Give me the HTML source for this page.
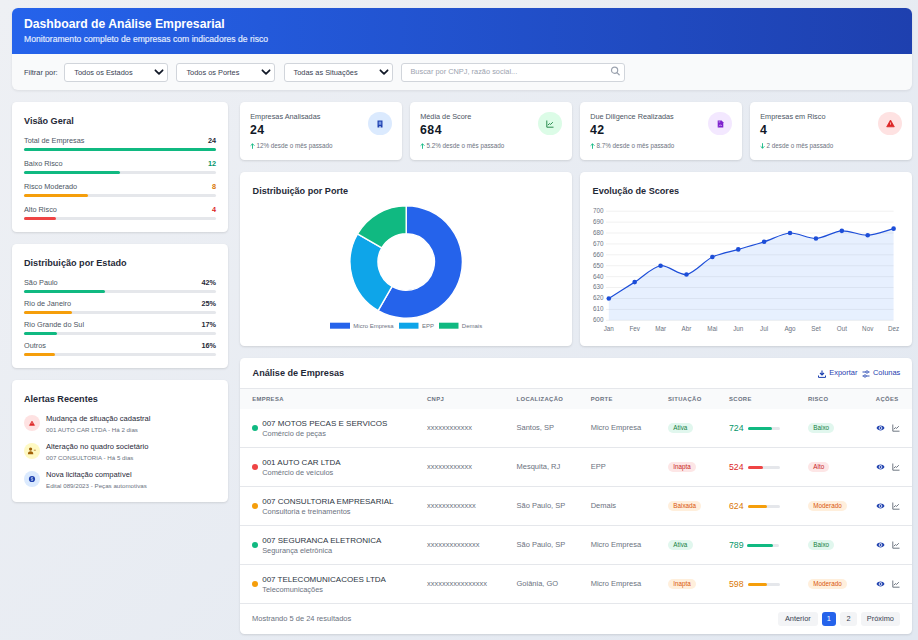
<!DOCTYPE html>
<html><head><meta charset="utf-8"><style>
html,body{margin:0;padding:0;width:918px;height:640px;overflow:hidden;}
body{background:linear-gradient(135deg,#eef0f4 0%,#e2e8f1 100%);font-family:"Liberation Sans",sans-serif;position:relative;}
.t{position:absolute;line-height:1;white-space:nowrap;}
.r{position:absolute;}
</style></head><body>
<div class="r" style="left:12px;top:8px;width:900px;height:82px;background:#f9fafb;border-radius:6px;overflow:hidden;box-shadow:0 1px 3px rgba(0,0,0,0.08);"></div>
<div class="r" style="left:12px;top:8px;width:900px;height:45.6px;background:linear-gradient(90deg,#2563eb,#1e40af);border-radius:6px 6px 0 0;"></div>
<div class="t" style="left:24.00px;top:17.77px;font-size:12.2px;color:#ffffff;font-weight:700;">Dashboard de Análise Empresarial</div>
<div class="t" style="left:24.00px;top:35.42px;font-size:8.6px;color:#e6efff;font-weight:400;-webkit-text-stroke:0.15px #e6efff;">Monitoramento completo de empresas com indicadores de risco</div>
<div class="t" style="left:24.00px;top:68.64px;font-size:7.4px;color:#374151;font-weight:500;">Filtrar por:</div>
<div class="r" style="left:64.3px;top:63.3px;width:103.50000000000001px;height:18.3px;background:#fff;border:1px solid #d1d5db;border-radius:3px;box-sizing:border-box;"></div>
<div class="t" style="left:74.30px;top:69.04px;font-size:7.4px;color:#374151;font-weight:400;">Todos os Estados</div>
<svg class="r" style="left:153.8px;top:67px;width:10px;height:10px" viewBox="0 0 10 10"><path d="M1.4 3.3 L5 6.8 L8.6 3.3" fill="none" stroke="#111827" stroke-width="1.75" stroke-linecap="round" stroke-linejoin="round"/></svg>
<div class="r" style="left:176.4px;top:63.3px;width:98.4px;height:18.3px;background:#fff;border:1px solid #d1d5db;border-radius:3px;box-sizing:border-box;"></div>
<div class="t" style="left:186.40px;top:69.04px;font-size:7.4px;color:#374151;font-weight:400;">Todos os Portes</div>
<svg class="r" style="left:260.8px;top:67px;width:10px;height:10px" viewBox="0 0 10 10"><path d="M1.4 3.3 L5 6.8 L8.6 3.3" fill="none" stroke="#111827" stroke-width="1.75" stroke-linecap="round" stroke-linejoin="round"/></svg>
<div class="r" style="left:283.5px;top:63.3px;width:109.30000000000001px;height:18.3px;background:#fff;border:1px solid #d1d5db;border-radius:3px;box-sizing:border-box;"></div>
<div class="t" style="left:293.50px;top:69.04px;font-size:7.4px;color:#374151;font-weight:400;">Todas as Situações</div>
<svg class="r" style="left:378.8px;top:67px;width:10px;height:10px" viewBox="0 0 10 10"><path d="M1.4 3.3 L5 6.8 L8.6 3.3" fill="none" stroke="#111827" stroke-width="1.75" stroke-linecap="round" stroke-linejoin="round"/></svg>
<div class="r" style="left:401.3px;top:62.5px;width:223.5px;height:19px;background:#fff;border:1px solid #d1d5db;border-radius:3px;box-sizing:border-box;"></div>
<div class="t" style="left:410.40px;top:68.14px;font-size:7.4px;color:#9ca3af;font-weight:400;">Buscar por CNPJ, razão social...</div>
<svg class="r" style="left:610px;top:66px;width:11px;height:11px" viewBox="0 0 11 11"><circle cx="4.6" cy="4.2" r="3.1" fill="none" stroke="#9ca3af" stroke-width="1.2"/><path d="M6.9 6.6 L9.2 8.8" stroke="#9ca3af" stroke-width="1.3" stroke-linecap="round"/></svg>
<div class="r" style="left:12px;top:102px;width:216px;height:130px;background:#fff;border-radius:4.5px;box-shadow:0 1px 3px rgba(0,0,0,0.07),0 1px 2px rgba(0,0,0,0.05);"></div>
<div class="t" style="left:24.00px;top:117.30px;font-size:9.1px;color:#1f2937;font-weight:700;">Visão Geral</div>
<div class="t" style="left:24.00px;top:136.82px;font-size:7.3px;color:#4b5563;font-weight:400;">Total de Empresas</div>
<div class="t" style="right:702.00px;top:136.82px;font-size:7.3px;color:#1f2937;font-weight:700;">24</div>
<div class="r" style="left:24px;top:148px;width:192px;height:3px;background:#e5e7eb;border-radius:2px;"></div>
<div class="r" style="left:24px;top:148px;width:192.0px;height:3px;background:#10b981;border-radius:2px;"></div>
<div class="t" style="left:24.00px;top:159.82px;font-size:7.3px;color:#4b5563;font-weight:400;">Baixo Risco</div>
<div class="t" style="right:702.00px;top:159.82px;font-size:7.3px;color:#059669;font-weight:700;">12</div>
<div class="r" style="left:24px;top:171px;width:192px;height:3px;background:#e5e7eb;border-radius:2px;"></div>
<div class="r" style="left:24px;top:171px;width:96.0px;height:3px;background:#10b981;border-radius:2px;"></div>
<div class="t" style="left:24.00px;top:182.82px;font-size:7.3px;color:#4b5563;font-weight:400;">Risco Moderado</div>
<div class="t" style="right:702.00px;top:182.82px;font-size:7.3px;color:#d97706;font-weight:700;">8</div>
<div class="r" style="left:24px;top:194px;width:192px;height:3px;background:#e5e7eb;border-radius:2px;"></div>
<div class="r" style="left:24px;top:194px;width:64.0px;height:3px;background:#f59e0b;border-radius:2px;"></div>
<div class="t" style="left:24.00px;top:205.82px;font-size:7.3px;color:#4b5563;font-weight:400;">Alto Risco</div>
<div class="t" style="right:702.00px;top:205.82px;font-size:7.3px;color:#dc2626;font-weight:700;">4</div>
<div class="r" style="left:24px;top:217px;width:192px;height:3px;background:#e5e7eb;border-radius:2px;"></div>
<div class="r" style="left:24px;top:217px;width:32.0px;height:3px;background:#ef4444;border-radius:2px;"></div>
<div class="r" style="left:12px;top:244px;width:216px;height:124px;background:#fff;border-radius:4.5px;box-shadow:0 1px 3px rgba(0,0,0,0.07),0 1px 2px rgba(0,0,0,0.05);"></div>
<div class="t" style="left:24.00px;top:259.30px;font-size:9.1px;color:#1f2937;font-weight:700;">Distribuição por Estado</div>
<div class="t" style="left:24.00px;top:278.82px;font-size:7.3px;color:#4b5563;font-weight:400;">São Paulo</div>
<div class="t" style="right:702.00px;top:278.82px;font-size:7.3px;color:#1f2937;font-weight:700;">42%</div>
<div class="r" style="left:24px;top:290px;width:192px;height:3px;background:#e5e7eb;border-radius:2px;"></div>
<div class="r" style="left:24px;top:290px;width:80.64px;height:3px;background:#10b981;border-radius:2px;"></div>
<div class="t" style="left:24.00px;top:299.82px;font-size:7.3px;color:#4b5563;font-weight:400;">Rio de Janeiro</div>
<div class="t" style="right:702.00px;top:299.82px;font-size:7.3px;color:#1f2937;font-weight:700;">25%</div>
<div class="r" style="left:24px;top:311px;width:192px;height:3px;background:#e5e7eb;border-radius:2px;"></div>
<div class="r" style="left:24px;top:311px;width:48.0px;height:3px;background:#f59e0b;border-radius:2px;"></div>
<div class="t" style="left:24.00px;top:320.82px;font-size:7.3px;color:#4b5563;font-weight:400;">Rio Grande do Sul</div>
<div class="t" style="right:702.00px;top:320.82px;font-size:7.3px;color:#1f2937;font-weight:700;">17%</div>
<div class="r" style="left:24px;top:332px;width:192px;height:3px;background:#e5e7eb;border-radius:2px;"></div>
<div class="r" style="left:24px;top:332px;width:32.64px;height:3px;background:#10b981;border-radius:2px;"></div>
<div class="t" style="left:24.00px;top:341.82px;font-size:7.3px;color:#4b5563;font-weight:400;">Outros</div>
<div class="t" style="right:702.00px;top:341.82px;font-size:7.3px;color:#1f2937;font-weight:700;">16%</div>
<div class="r" style="left:24px;top:353px;width:192px;height:3px;background:#e5e7eb;border-radius:2px;"></div>
<div class="r" style="left:24px;top:353px;width:30.72px;height:3px;background:#f59e0b;border-radius:2px;"></div>
<div class="r" style="left:12px;top:380px;width:216px;height:122px;background:#fff;border-radius:4.5px;box-shadow:0 1px 3px rgba(0,0,0,0.07),0 1px 2px rgba(0,0,0,0.05);"></div>
<div class="t" style="left:24.00px;top:395.00px;font-size:9.1px;color:#1f2937;font-weight:700;">Alertas Recentes</div>
<div class="r" style="left:24px;top:414.7px;width:16px;height:16px;background:#fee2e2;border-radius:50%;"></div>
<svg class="r" style="left:28px;top:418.7px;width:8px;height:8px" viewBox="0 0 8 8"><path d="M4 2 L6.6 6.4 L1.4 6.4 Z" fill="#dc2626" stroke="#dc2626" stroke-width="0.5" stroke-linejoin="round"/><rect x="3.7" y="3.6" width="0.6" height="1.5" fill="#fecaca"/></svg>
<div class="t" style="left:46.00px;top:414.71px;font-size:7.55px;color:#1f2937;font-weight:400;">Mudança de situação cadastral</div>
<div class="t" style="left:46.00px;top:426.65px;font-size:6.2px;color:#6b7280;font-weight:400;">001 AUTO CAR LTDA - Há 2 dias</div>
<div class="r" style="left:24px;top:442.7px;width:16px;height:16px;background:#fef9c3;border-radius:50%;"></div>
<svg class="r" style="left:27px;top:446.7px;width:10px;height:8px" viewBox="0 0 10 8"><circle cx="3.6" cy="2.1" r="1.6" fill="#a16207"/><path d="M0.9 7.3 C0.9 4.9 1.8 4.2 3.6 4.2 C5.4 4.2 6.3 4.9 6.3 7.3 Z" fill="#a16207"/><path d="M6.8 3.2 L8.8 3.2" stroke="#a16207" stroke-width="0.7"/></svg>
<div class="t" style="left:46.00px;top:442.71px;font-size:7.55px;color:#1f2937;font-weight:400;">Alteração no quadro societário</div>
<div class="t" style="left:46.00px;top:454.65px;font-size:6.2px;color:#6b7280;font-weight:400;">007 CONSULTORIA - Há 5 dias</div>
<div class="r" style="left:24px;top:470.7px;width:16px;height:16px;background:#dbeafe;border-radius:50%;"></div>
<svg class="r" style="left:28px;top:474.7px;width:8px;height:8px" viewBox="0 0 8 8"><circle cx="4" cy="4" r="3.1" fill="#1e40af"/><path d="M4.9 2.9 C4.6 2.4 3.2 2.4 3.2 3.3 C3.2 4.1 4.9 3.9 4.9 4.8 C4.9 5.6 3.4 5.6 3.1 5.1 M4 2 V6" fill="none" stroke="#dbeafe" stroke-width="0.55"/></svg>
<div class="t" style="left:46.00px;top:470.71px;font-size:7.55px;color:#1f2937;font-weight:400;">Nova licitação compatível</div>
<div class="t" style="left:46.00px;top:482.65px;font-size:6.2px;color:#6b7280;font-weight:400;">Edital 089/2023 - Peças automotivas</div>
<div class="r" style="left:240px;top:102px;width:162px;height:58px;background:#fff;border-radius:4.5px;box-shadow:0 1px 3px rgba(0,0,0,0.07),0 1px 2px rgba(0,0,0,0.05);"></div>
<div class="t" style="left:250.20px;top:112.62px;font-size:7.3px;color:#4b5563;font-weight:400;">Empresas Analisadas</div>
<div class="t" style="left:250.00px;top:123.79px;font-size:12.3px;color:#111827;font-weight:700;letter-spacing:0.5px;">24</div>
<svg class="r" style="left:250px;top:143px;width:5px;height:6px" viewBox="0 0 5 6"><path d="M2.5 5.8 L2.5 0.8 M0.6 2.7 L2.5 0.8 L4.4 2.7" fill="none" stroke="#10b981" stroke-width="0.9"/></svg>
<div class="t" style="left:256.50px;top:143.27px;font-size:6.3px;color:#6b7280;font-weight:400;">12% desde o mês passado</div>
<div class="r" style="left:368.3px;top:112.1px;width:23.4px;height:23.4px;background:#dbeafe;border-radius:50%;"></div>
<svg class="r" style="left:376px;top:119.8px;width:8px;height:8px" viewBox="0 0 8 8"><path d="M1.5 0.5 H6.5 V7.5 H4.6 V6 H3.4 V7.5 H1.5 Z" fill="#1e40af"/><rect x="2.7" y="1.6" width="2.6" height="3.2" fill="#7b9be6"/></svg>
<div class="r" style="left:410px;top:102px;width:162px;height:58px;background:#fff;border-radius:4.5px;box-shadow:0 1px 3px rgba(0,0,0,0.07),0 1px 2px rgba(0,0,0,0.05);"></div>
<div class="t" style="left:420.20px;top:112.62px;font-size:7.3px;color:#4b5563;font-weight:400;">Média de Score</div>
<div class="t" style="left:420.00px;top:123.79px;font-size:12.3px;color:#111827;font-weight:700;letter-spacing:0.5px;">684</div>
<svg class="r" style="left:420px;top:143px;width:5px;height:6px" viewBox="0 0 5 6"><path d="M2.5 5.8 L2.5 0.8 M0.6 2.7 L2.5 0.8 L4.4 2.7" fill="none" stroke="#10b981" stroke-width="0.9"/></svg>
<div class="t" style="left:426.50px;top:143.27px;font-size:6.3px;color:#6b7280;font-weight:400;">5.2% desde o mês passado</div>
<div class="r" style="left:538.3px;top:112.1px;width:23.4px;height:23.4px;background:#dcfce7;border-radius:50%;"></div>
<svg class="r" style="left:546px;top:119.8px;width:8px;height:8px" viewBox="0 0 8 8"><path d="M0.8 0.5 V7.2 H7.5" fill="none" stroke="#15803d" stroke-width="0.9"/><path d="M1.8 5.2 L3.4 3.6 L4.6 4.4 L6.8 2.2" fill="none" stroke="#15803d" stroke-width="0.9"/></svg>
<div class="r" style="left:580px;top:102px;width:162px;height:58px;background:#fff;border-radius:4.5px;box-shadow:0 1px 3px rgba(0,0,0,0.07),0 1px 2px rgba(0,0,0,0.05);"></div>
<div class="t" style="left:590.20px;top:112.62px;font-size:7.3px;color:#4b5563;font-weight:400;">Due Diligence Realizadas</div>
<div class="t" style="left:590.00px;top:123.79px;font-size:12.3px;color:#111827;font-weight:700;letter-spacing:0.5px;">42</div>
<svg class="r" style="left:590px;top:143px;width:5px;height:6px" viewBox="0 0 5 6"><path d="M2.5 5.8 L2.5 0.8 M0.6 2.7 L2.5 0.8 L4.4 2.7" fill="none" stroke="#10b981" stroke-width="0.9"/></svg>
<div class="t" style="left:596.50px;top:143.27px;font-size:6.3px;color:#6b7280;font-weight:400;">8.7% desde o mês passado</div>
<div class="r" style="left:708.3px;top:112.1px;width:23.4px;height:23.4px;background:#f3e8ff;border-radius:50%;"></div>
<svg class="r" style="left:716.5px;top:119.8px;width:7px;height:8px" viewBox="0 0 7 8"><path d="M0.7 0.5 H4.6 L6.3 2.2 V7.5 H0.7 Z" fill="#7e22ce"/><path d="M1.8 6 C2.6 4.8 4.2 4.8 5 6" stroke="#e9d5ff" stroke-width="0.7" fill="none"/><rect x="1.6" y="1.6" width="1.6" height="0.7" fill="#e9d5ff"/></svg>
<div class="r" style="left:750px;top:102px;width:162px;height:58px;background:#fff;border-radius:4.5px;box-shadow:0 1px 3px rgba(0,0,0,0.07),0 1px 2px rgba(0,0,0,0.05);"></div>
<div class="t" style="left:760.20px;top:112.62px;font-size:7.3px;color:#4b5563;font-weight:400;">Empresas em Risco</div>
<div class="t" style="left:760.00px;top:123.79px;font-size:12.3px;color:#111827;font-weight:700;letter-spacing:0.5px;">4</div>
<svg class="r" style="left:760px;top:143px;width:5px;height:6px" viewBox="0 0 5 6"><path d="M2.5 0.2 L2.5 5.2 M0.6 3.3 L2.5 5.2 L4.4 3.3" fill="none" stroke="#10b981" stroke-width="0.9"/></svg>
<div class="t" style="left:766.50px;top:143.27px;font-size:6.3px;color:#6b7280;font-weight:400;">2 desde o mês passado</div>
<div class="r" style="left:878.3px;top:112.1px;width:23.4px;height:23.4px;background:#fee2e2;border-radius:50%;"></div>
<svg class="r" style="left:885.5px;top:119.3px;width:9px;height:9px" viewBox="0 0 9 9"><path d="M4.5 1 L8.3 7.8 L0.7 7.8 Z" fill="#dc2626" stroke="#dc2626" stroke-width="0.8" stroke-linejoin="round"/><rect x="4.1" y="3.5" width="0.8" height="2.2" fill="#fecaca"/></svg>
<div class="r" style="left:240px;top:172px;width:332px;height:174px;background:#fff;border-radius:4.5px;box-shadow:0 1px 3px rgba(0,0,0,0.07),0 1px 2px rgba(0,0,0,0.05);"></div>
<div class="t" style="left:252.60px;top:187.20px;font-size:9.1px;color:#1f2937;font-weight:700;">Distribuição por Porte</div>
<div class="r" style="left:580px;top:172px;width:332px;height:174px;background:#fff;border-radius:4.5px;box-shadow:0 1px 3px rgba(0,0,0,0.07),0 1px 2px rgba(0,0,0,0.05);"></div>
<div class="t" style="left:592.60px;top:187.20px;font-size:9.1px;color:#1f2937;font-weight:700;">Evolução de Scores</div>
<svg class="r" style="left:0;top:0;width:918px;height:640px;overflow:visible" viewBox="0 0 918 640"><path d="M406.20 205.80 A56.2 56.2 0 1 1 378.10 310.67 L392.10 286.42 A28.2 28.2 0 1 0 406.20 233.80 Z" fill="#2563eb" stroke="#fff" stroke-width="1.4" stroke-linejoin="round"/><path d="M378.10 310.67 A56.2 56.2 0 0 1 357.53 233.90 L381.78 247.90 A28.2 28.2 0 0 0 392.10 286.42 Z" fill="#0ea5e9" stroke="#fff" stroke-width="1.4" stroke-linejoin="round"/><path d="M357.53 233.90 A56.2 56.2 0 0 1 406.20 205.80 L406.20 233.80 A28.2 28.2 0 0 0 381.78 247.90 Z" fill="#10b981" stroke="#fff" stroke-width="1.4" stroke-linejoin="round"/><rect x="330" y="322.7" width="20" height="6" fill="#2563eb"/><rect x="399" y="322.7" width="19.5" height="6" fill="#0ea5e9"/><rect x="439" y="322.7" width="19.5" height="6" fill="#10b981"/><line x1="606" y1="211.20" x2="893.6" y2="211.20" stroke="rgba(0,0,0,0.08)" stroke-width="0.8"/><line x1="606" y1="222.11" x2="893.6" y2="222.11" stroke="rgba(0,0,0,0.08)" stroke-width="0.8"/><line x1="606" y1="233.02" x2="893.6" y2="233.02" stroke="rgba(0,0,0,0.08)" stroke-width="0.8"/><line x1="606" y1="243.93" x2="893.6" y2="243.93" stroke="rgba(0,0,0,0.08)" stroke-width="0.8"/><line x1="606" y1="254.84" x2="893.6" y2="254.84" stroke="rgba(0,0,0,0.08)" stroke-width="0.8"/><line x1="606" y1="265.75" x2="893.6" y2="265.75" stroke="rgba(0,0,0,0.08)" stroke-width="0.8"/><line x1="606" y1="276.66" x2="893.6" y2="276.66" stroke="rgba(0,0,0,0.08)" stroke-width="0.8"/><line x1="606" y1="287.57" x2="893.6" y2="287.57" stroke="rgba(0,0,0,0.08)" stroke-width="0.8"/><line x1="606" y1="298.48" x2="893.6" y2="298.48" stroke="rgba(0,0,0,0.08)" stroke-width="0.8"/><line x1="606" y1="309.39" x2="893.6" y2="309.39" stroke="rgba(0,0,0,0.08)" stroke-width="0.8"/><line x1="606" y1="320.30" x2="893.6" y2="320.30" stroke="rgba(0,0,0,0.08)" stroke-width="0.8"/><path d="M608.80 298.48 C616.57 293.57 626.92 287.02 634.69 282.12 C642.46 277.21 652.37 266.96 660.58 265.75 C667.91 264.67 679.22 275.70 686.47 274.48 C694.76 273.08 704.03 261.06 712.36 257.02 C719.57 253.53 730.49 251.68 738.25 249.38 C746.02 247.09 756.43 244.19 764.15 241.75 C771.96 239.28 782.14 233.52 790.04 233.02 C797.68 232.54 808.24 238.80 815.93 238.47 C823.77 238.14 833.94 231.34 841.82 230.84 C849.48 230.35 860.01 235.53 867.71 235.20 C875.54 234.87 885.83 230.62 893.60 228.66 L893.60 320.30 L608.80 320.30 Z" fill="rgba(59,130,246,0.12)"/><path d="M608.80 298.48 C616.57 293.57 626.92 287.02 634.69 282.12 C642.46 277.21 652.37 266.96 660.58 265.75 C667.91 264.67 679.22 275.70 686.47 274.48 C694.76 273.08 704.03 261.06 712.36 257.02 C719.57 253.53 730.49 251.68 738.25 249.38 C746.02 247.09 756.43 244.19 764.15 241.75 C771.96 239.28 782.14 233.52 790.04 233.02 C797.68 232.54 808.24 238.80 815.93 238.47 C823.77 238.14 833.94 231.34 841.82 230.84 C849.48 230.35 860.01 235.53 867.71 235.20 C875.54 234.87 885.83 230.62 893.60 228.66" fill="none" stroke="#1d4ed8" stroke-width="1.2"/><circle cx="608.80" cy="298.48" r="2.3" fill="#1d4ed8"/><circle cx="634.69" cy="282.12" r="2.3" fill="#1d4ed8"/><circle cx="660.58" cy="265.75" r="2.3" fill="#1d4ed8"/><circle cx="686.47" cy="274.48" r="2.3" fill="#1d4ed8"/><circle cx="712.36" cy="257.02" r="2.3" fill="#1d4ed8"/><circle cx="738.25" cy="249.38" r="2.3" fill="#1d4ed8"/><circle cx="764.15" cy="241.75" r="2.3" fill="#1d4ed8"/><circle cx="790.04" cy="233.02" r="2.3" fill="#1d4ed8"/><circle cx="815.93" cy="238.47" r="2.3" fill="#1d4ed8"/><circle cx="841.82" cy="230.84" r="2.3" fill="#1d4ed8"/><circle cx="867.71" cy="235.20" r="2.3" fill="#1d4ed8"/><circle cx="893.60" cy="228.66" r="2.3" fill="#1d4ed8"/></svg>
<div class="t" style="left:353.30px;top:322.72px;font-size:6px;color:#6b7280;font-weight:400;">Micro Empresa</div>
<div class="t" style="left:422.00px;top:322.72px;font-size:6px;color:#6b7280;font-weight:400;">EPP</div>
<div class="t" style="left:461.80px;top:322.72px;font-size:6px;color:#6b7280;font-weight:400;">Demais</div>
<div class="t" style="right:314.50px;top:208.07px;font-size:6.3px;color:#6b7280;font-weight:400;">700</div>
<div class="t" style="right:314.50px;top:218.98px;font-size:6.3px;color:#6b7280;font-weight:400;">690</div>
<div class="t" style="right:314.50px;top:229.89px;font-size:6.3px;color:#6b7280;font-weight:400;">680</div>
<div class="t" style="right:314.50px;top:240.80px;font-size:6.3px;color:#6b7280;font-weight:400;">670</div>
<div class="t" style="right:314.50px;top:251.71px;font-size:6.3px;color:#6b7280;font-weight:400;">660</div>
<div class="t" style="right:314.50px;top:262.62px;font-size:6.3px;color:#6b7280;font-weight:400;">650</div>
<div class="t" style="right:314.50px;top:273.53px;font-size:6.3px;color:#6b7280;font-weight:400;">640</div>
<div class="t" style="right:314.50px;top:284.44px;font-size:6.3px;color:#6b7280;font-weight:400;">630</div>
<div class="t" style="right:314.50px;top:295.35px;font-size:6.3px;color:#6b7280;font-weight:400;">620</div>
<div class="t" style="right:314.50px;top:306.26px;font-size:6.3px;color:#6b7280;font-weight:400;">610</div>
<div class="t" style="right:314.50px;top:317.17px;font-size:6.3px;color:#6b7280;font-weight:400;">600</div>
<div class="t" style="left:608.80px;transform:translateX(-50%);top:326.17px;font-size:6.3px;color:#6b7280;font-weight:400;">Jan</div>
<div class="t" style="left:634.69px;transform:translateX(-50%);top:326.17px;font-size:6.3px;color:#6b7280;font-weight:400;">Fev</div>
<div class="t" style="left:660.58px;transform:translateX(-50%);top:326.17px;font-size:6.3px;color:#6b7280;font-weight:400;">Mar</div>
<div class="t" style="left:686.47px;transform:translateX(-50%);top:326.17px;font-size:6.3px;color:#6b7280;font-weight:400;">Abr</div>
<div class="t" style="left:712.36px;transform:translateX(-50%);top:326.17px;font-size:6.3px;color:#6b7280;font-weight:400;">Mai</div>
<div class="t" style="left:738.25px;transform:translateX(-50%);top:326.17px;font-size:6.3px;color:#6b7280;font-weight:400;">Jun</div>
<div class="t" style="left:764.15px;transform:translateX(-50%);top:326.17px;font-size:6.3px;color:#6b7280;font-weight:400;">Jul</div>
<div class="t" style="left:790.04px;transform:translateX(-50%);top:326.17px;font-size:6.3px;color:#6b7280;font-weight:400;">Ago</div>
<div class="t" style="left:815.93px;transform:translateX(-50%);top:326.17px;font-size:6.3px;color:#6b7280;font-weight:400;">Set</div>
<div class="t" style="left:841.82px;transform:translateX(-50%);top:326.17px;font-size:6.3px;color:#6b7280;font-weight:400;">Out</div>
<div class="t" style="left:867.71px;transform:translateX(-50%);top:326.17px;font-size:6.3px;color:#6b7280;font-weight:400;">Nov</div>
<div class="t" style="left:893.60px;transform:translateX(-50%);top:326.17px;font-size:6.3px;color:#6b7280;font-weight:400;">Dez</div>
<div class="r" style="left:240px;top:358px;width:672px;height:276px;background:#fff;border-radius:4.5px;box-shadow:0 1px 3px rgba(0,0,0,0.07),0 1px 2px rgba(0,0,0,0.05);overflow:hidden;"></div>
<div class="t" style="left:252.60px;top:368.80px;font-size:9.1px;color:#1f2937;font-weight:700;">Análise de Empresas</div>
<svg class="r" style="left:818px;top:369.5px;width:8px;height:8px" viewBox="0 0 8 8"><path d="M4 0.5 V5 M2 3 L4 5 L6 3" fill="none" stroke="#1e40af" stroke-width="1.1"/><path d="M0.5 5.5 V7.4 H7.5 V5.5" fill="none" stroke="#1e40af" stroke-width="1"/></svg>
<div class="t" style="left:829.30px;top:368.59px;font-size:7.45px;color:#1e40af;font-weight:400;">Exportar</div>
<svg class="r" style="left:861.8px;top:369.8px;width:8px;height:8px" viewBox="0 0 8 8"><path d="M0.5 2 H7.5 M0.5 6 H7.5" stroke="#1e40af" stroke-width="0.9"/><circle cx="5" cy="2" r="1.2" fill="#fff" stroke="#1e40af" stroke-width="0.8"/><circle cx="3" cy="6" r="1.2" fill="#fff" stroke="#1e40af" stroke-width="0.8"/></svg>
<div class="t" style="left:873.00px;top:368.59px;font-size:7.45px;color:#1e40af;font-weight:400;">Colunas</div>
<div class="r" style="left:240px;top:388px;width:672px;height:21px;background:#f9fafb;border-top:1px solid #e5e7eb;box-sizing:border-box;"></div>
<div class="t" style="left:252.20px;top:397.01px;font-size:5.9px;color:#6b7280;font-weight:700;letter-spacing:0.35px;">EMPRESA</div>
<div class="t" style="left:427.00px;top:397.01px;font-size:5.9px;color:#6b7280;font-weight:700;letter-spacing:0.35px;">CNPJ</div>
<div class="t" style="left:516.50px;top:397.01px;font-size:5.9px;color:#6b7280;font-weight:700;letter-spacing:0.35px;">LOCALIZAÇÃO</div>
<div class="t" style="left:590.70px;top:397.01px;font-size:5.9px;color:#6b7280;font-weight:700;letter-spacing:0.35px;">PORTE</div>
<div class="t" style="left:668.00px;top:397.01px;font-size:5.9px;color:#6b7280;font-weight:700;letter-spacing:0.35px;">SITUAÇÃO</div>
<div class="t" style="left:729.00px;top:397.01px;font-size:5.9px;color:#6b7280;font-weight:700;letter-spacing:0.35px;">SCORE</div>
<div class="t" style="left:808.00px;top:397.01px;font-size:5.9px;color:#6b7280;font-weight:700;letter-spacing:0.35px;">RISCO</div>
<div class="t" style="right:19.50px;top:397.01px;font-size:5.9px;color:#6b7280;font-weight:700;letter-spacing:0.35px;">AÇÕES</div>
<div class="r" style="left:252px;top:425px;width:6px;height:6px;background:#10b981;border-radius:50%;"></div>
<div class="t" style="left:262.20px;top:420.23px;font-size:8.0px;color:#2d3643;font-weight:400;">007 MOTOS PECAS E SERVICOS</div>
<div class="t" style="left:262.20px;top:430.24px;font-size:7.4px;color:#6b7280;font-weight:400;">Comércio de peças</div>
<div class="t" style="left:427.00px;top:423.95px;font-size:7.5px;color:#6b7280;font-weight:400;">xxxxxxxxxxxx</div>
<div class="t" style="left:516.50px;top:423.95px;font-size:7.5px;color:#6b7280;font-weight:400;">Santos, SP</div>
<div class="t" style="left:590.70px;top:423.95px;font-size:7.5px;color:#6b7280;font-weight:400;">Micro Empresa</div>
<div class="t" style="left:668px;top:423.1px;height:10px;line-height:10px;padding:0 5.3px;border-radius:5px;background:#e1f7ee;color:#15803d;font-size:6.3px;">Ativa</div>
<div class="t" style="left:729.00px;top:424.39px;font-size:8.75px;color:#059669;font-weight:400;">724</div>
<div class="r" style="left:747.8px;top:426.5px;width:32px;height:3px;background:#e5e7eb;border-radius:2px;"></div>
<div class="r" style="left:747.8px;top:426.5px;width:24.32px;height:3px;background:#10b981;border-radius:2px;"></div>
<div class="t" style="left:808px;top:423.1px;height:10px;line-height:10px;padding:0 5.3px;border-radius:5px;background:#e1f7ee;color:#15803d;font-size:6.3px;">Baixo</div>
<svg class="r" style="left:875.5px;top:424px;width:9px;height:8px" viewBox="0 0 9 8"><path d="M0.5 4 C2 0.8 7 0.8 8.5 4 C7 7.2 2 7.2 0.5 4 Z" fill="#1e40af"/><circle cx="4.5" cy="4" r="1.8" fill="#fff"/><circle cx="4.5" cy="4" r="1" fill="#1e40af"/></svg>
<svg class="r" style="left:891.5px;top:424px;width:8px;height:8px" viewBox="0 0 8 8"><path d="M0.8 0.5 V7.2 H7.5" fill="none" stroke="#4b5563" stroke-width="0.8"/><path d="M1.8 5.2 L3.4 3.6 L4.6 4.4 L6.8 2.2" fill="none" stroke="#4b5563" stroke-width="0.8"/></svg>
<div class="r" style="left:240px;top:447px;width:672px;height:1px;background:#e5e7eb;"></div>
<div class="r" style="left:252px;top:464px;width:6px;height:6px;background:#ef4444;border-radius:50%;"></div>
<div class="t" style="left:262.20px;top:459.23px;font-size:8.0px;color:#2d3643;font-weight:400;">001 AUTO CAR LTDA</div>
<div class="t" style="left:262.20px;top:469.24px;font-size:7.4px;color:#6b7280;font-weight:400;">Comércio de veículos</div>
<div class="t" style="left:427.00px;top:462.95px;font-size:7.5px;color:#6b7280;font-weight:400;">xxxxxxxxxxxx</div>
<div class="t" style="left:516.50px;top:462.95px;font-size:7.5px;color:#6b7280;font-weight:400;">Mesquita, RJ</div>
<div class="t" style="left:590.70px;top:462.95px;font-size:7.5px;color:#6b7280;font-weight:400;">EPP</div>
<div class="t" style="left:668px;top:462.1px;height:10px;line-height:10px;padding:0 5.3px;border-radius:5px;background:#fde6e6;color:#c81e1e;font-size:6.3px;">Inapta</div>
<div class="t" style="left:729.00px;top:463.39px;font-size:8.75px;color:#dc2626;font-weight:400;">524</div>
<div class="r" style="left:747.8px;top:465.5px;width:32px;height:3px;background:#e5e7eb;border-radius:2px;"></div>
<div class="r" style="left:747.8px;top:465.5px;width:15.68px;height:3px;background:#ef4444;border-radius:2px;"></div>
<div class="t" style="left:808px;top:462.1px;height:10px;line-height:10px;padding:0 5.3px;border-radius:5px;background:#fde6e6;color:#c81e1e;font-size:6.3px;">Alto</div>
<svg class="r" style="left:875.5px;top:463px;width:9px;height:8px" viewBox="0 0 9 8"><path d="M0.5 4 C2 0.8 7 0.8 8.5 4 C7 7.2 2 7.2 0.5 4 Z" fill="#1e40af"/><circle cx="4.5" cy="4" r="1.8" fill="#fff"/><circle cx="4.5" cy="4" r="1" fill="#1e40af"/></svg>
<svg class="r" style="left:891.5px;top:463px;width:8px;height:8px" viewBox="0 0 8 8"><path d="M0.8 0.5 V7.2 H7.5" fill="none" stroke="#4b5563" stroke-width="0.8"/><path d="M1.8 5.2 L3.4 3.6 L4.6 4.4 L6.8 2.2" fill="none" stroke="#4b5563" stroke-width="0.8"/></svg>
<div class="r" style="left:240px;top:486px;width:672px;height:1px;background:#e5e7eb;"></div>
<div class="r" style="left:252px;top:503px;width:6px;height:6px;background:#f59e0b;border-radius:50%;"></div>
<div class="t" style="left:262.20px;top:498.23px;font-size:8.0px;color:#2d3643;font-weight:400;">007 CONSULTORIA EMPRESARIAL</div>
<div class="t" style="left:262.20px;top:508.24px;font-size:7.4px;color:#6b7280;font-weight:400;">Consultoria e treinamentos</div>
<div class="t" style="left:427.00px;top:501.95px;font-size:7.5px;color:#6b7280;font-weight:400;">xxxxxxxxxxxxx</div>
<div class="t" style="left:516.50px;top:501.95px;font-size:7.5px;color:#6b7280;font-weight:400;">São Paulo, SP</div>
<div class="t" style="left:590.70px;top:501.95px;font-size:7.5px;color:#6b7280;font-weight:400;">Demais</div>
<div class="t" style="left:668px;top:501.1px;height:10px;line-height:10px;padding:0 5.3px;border-radius:5px;background:#ffefdc;color:#d9560c;font-size:6.3px;">Baixada</div>
<div class="t" style="left:729.00px;top:502.39px;font-size:8.75px;color:#d97706;font-weight:400;">624</div>
<div class="r" style="left:747.8px;top:504.5px;width:32px;height:3px;background:#e5e7eb;border-radius:2px;"></div>
<div class="r" style="left:747.8px;top:504.5px;width:19.68px;height:3px;background:#f59e0b;border-radius:2px;"></div>
<div class="t" style="left:808px;top:501.1px;height:10px;line-height:10px;padding:0 5.3px;border-radius:5px;background:#ffefdc;color:#d9560c;font-size:6.3px;">Moderado</div>
<svg class="r" style="left:875.5px;top:502px;width:9px;height:8px" viewBox="0 0 9 8"><path d="M0.5 4 C2 0.8 7 0.8 8.5 4 C7 7.2 2 7.2 0.5 4 Z" fill="#1e40af"/><circle cx="4.5" cy="4" r="1.8" fill="#fff"/><circle cx="4.5" cy="4" r="1" fill="#1e40af"/></svg>
<svg class="r" style="left:891.5px;top:502px;width:8px;height:8px" viewBox="0 0 8 8"><path d="M0.8 0.5 V7.2 H7.5" fill="none" stroke="#4b5563" stroke-width="0.8"/><path d="M1.8 5.2 L3.4 3.6 L4.6 4.4 L6.8 2.2" fill="none" stroke="#4b5563" stroke-width="0.8"/></svg>
<div class="r" style="left:240px;top:525px;width:672px;height:1px;background:#e5e7eb;"></div>
<div class="r" style="left:252px;top:542px;width:6px;height:6px;background:#10b981;border-radius:50%;"></div>
<div class="t" style="left:262.20px;top:537.23px;font-size:8.0px;color:#2d3643;font-weight:400;">007 SEGURANCA ELETRONICA</div>
<div class="t" style="left:262.20px;top:547.24px;font-size:7.4px;color:#6b7280;font-weight:400;">Segurança eletrônica</div>
<div class="t" style="left:427.00px;top:540.95px;font-size:7.5px;color:#6b7280;font-weight:400;">xxxxxxxxxxxxxx</div>
<div class="t" style="left:516.50px;top:540.95px;font-size:7.5px;color:#6b7280;font-weight:400;">São Paulo, SP</div>
<div class="t" style="left:590.70px;top:540.95px;font-size:7.5px;color:#6b7280;font-weight:400;">Micro Empresa</div>
<div class="t" style="left:668px;top:540.1px;height:10px;line-height:10px;padding:0 5.3px;border-radius:5px;background:#e1f7ee;color:#15803d;font-size:6.3px;">Ativa</div>
<div class="t" style="left:729.00px;top:541.39px;font-size:8.75px;color:#059669;font-weight:400;">789</div>
<div class="r" style="left:746.8px;top:543.5px;width:32px;height:3px;background:#e5e7eb;border-radius:2px;"></div>
<div class="r" style="left:746.8px;top:543.5px;width:26.24px;height:3px;background:#10b981;border-radius:2px;"></div>
<div class="t" style="left:808px;top:540.1px;height:10px;line-height:10px;padding:0 5.3px;border-radius:5px;background:#e1f7ee;color:#15803d;font-size:6.3px;">Baixo</div>
<svg class="r" style="left:875.5px;top:541px;width:9px;height:8px" viewBox="0 0 9 8"><path d="M0.5 4 C2 0.8 7 0.8 8.5 4 C7 7.2 2 7.2 0.5 4 Z" fill="#1e40af"/><circle cx="4.5" cy="4" r="1.8" fill="#fff"/><circle cx="4.5" cy="4" r="1" fill="#1e40af"/></svg>
<svg class="r" style="left:891.5px;top:541px;width:8px;height:8px" viewBox="0 0 8 8"><path d="M0.8 0.5 V7.2 H7.5" fill="none" stroke="#4b5563" stroke-width="0.8"/><path d="M1.8 5.2 L3.4 3.6 L4.6 4.4 L6.8 2.2" fill="none" stroke="#4b5563" stroke-width="0.8"/></svg>
<div class="r" style="left:240px;top:564px;width:672px;height:1px;background:#e5e7eb;"></div>
<div class="r" style="left:252px;top:581px;width:6px;height:6px;background:#f59e0b;border-radius:50%;"></div>
<div class="t" style="left:262.20px;top:576.23px;font-size:8.0px;color:#2d3643;font-weight:400;">007 TELECOMUNICACOES LTDA</div>
<div class="t" style="left:262.20px;top:586.24px;font-size:7.4px;color:#6b7280;font-weight:400;">Telecomunicações</div>
<div class="t" style="left:427.00px;top:579.95px;font-size:7.5px;color:#6b7280;font-weight:400;">xxxxxxxxxxxxxxxx</div>
<div class="t" style="left:516.50px;top:579.95px;font-size:7.5px;color:#6b7280;font-weight:400;">Goiânia, GO</div>
<div class="t" style="left:590.70px;top:579.95px;font-size:7.5px;color:#6b7280;font-weight:400;">Micro Empresa</div>
<div class="t" style="left:668px;top:579.1px;height:10px;line-height:10px;padding:0 5.3px;border-radius:5px;background:#ffefdc;color:#d9560c;font-size:6.3px;">Inapta</div>
<div class="t" style="left:729.00px;top:580.39px;font-size:8.75px;color:#d97706;font-weight:400;">598</div>
<div class="r" style="left:747.8px;top:582.5px;width:32px;height:3px;background:#e5e7eb;border-radius:2px;"></div>
<div class="r" style="left:747.8px;top:582.5px;width:18.88px;height:3px;background:#f59e0b;border-radius:2px;"></div>
<div class="t" style="left:808px;top:579.1px;height:10px;line-height:10px;padding:0 5.3px;border-radius:5px;background:#ffefdc;color:#d9560c;font-size:6.3px;">Moderado</div>
<svg class="r" style="left:875.5px;top:580px;width:9px;height:8px" viewBox="0 0 9 8"><path d="M0.5 4 C2 0.8 7 0.8 8.5 4 C7 7.2 2 7.2 0.5 4 Z" fill="#1e40af"/><circle cx="4.5" cy="4" r="1.8" fill="#fff"/><circle cx="4.5" cy="4" r="1" fill="#1e40af"/></svg>
<svg class="r" style="left:891.5px;top:580px;width:8px;height:8px" viewBox="0 0 8 8"><path d="M0.8 0.5 V7.2 H7.5" fill="none" stroke="#4b5563" stroke-width="0.8"/><path d="M1.8 5.2 L3.4 3.6 L4.6 4.4 L6.8 2.2" fill="none" stroke="#4b5563" stroke-width="0.8"/></svg>
<div class="r" style="left:240px;top:603px;width:672px;height:1px;background:#e5e7eb;"></div>
<div class="t" style="left:252.00px;top:614.95px;font-size:7.5px;color:#6b7280;font-weight:400;">Mostrando 5 de 24 resultados</div>
<div class="t" style="left:778px;top:612px;width:39.700000000000045px;height:14px;line-height:14px;text-align:center;border-radius:3px;background:#f3f4f6;color:#374151;font-size:7.4px;">Anterior</div>
<div class="t" style="left:822px;top:612px;width:13.700000000000045px;height:14px;line-height:14px;text-align:center;border-radius:3px;background:#2563eb;color:#ffffff;font-size:7.4px;">1</div>
<div class="t" style="left:840.4px;top:612px;width:16.300000000000068px;height:14px;line-height:14px;text-align:center;border-radius:3px;background:#f3f4f6;color:#374151;font-size:7.4px;">2</div>
<div class="t" style="left:861px;top:612px;width:38.799999999999955px;height:14px;line-height:14px;text-align:center;border-radius:3px;background:#f3f4f6;color:#374151;font-size:7.4px;">Próximo</div>
</body></html>
